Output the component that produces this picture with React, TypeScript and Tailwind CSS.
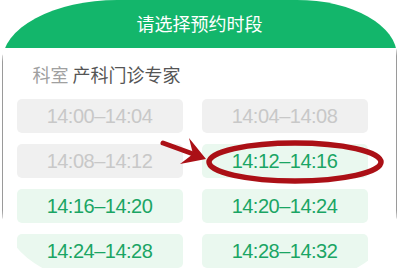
import React from "react";

const slots: { t: string; on: boolean }[] = [
  { t: "14:00–14:04", on: false },
  { t: "14:04–14:08", on: false },
  { t: "14:08–14:12", on: false },
  { t: "14:12–14:16", on: true },
  { t: "14:16–14:20", on: true },
  { t: "14:20–14:24", on: true },
  { t: "14:24–14:28", on: true },
  { t: "14:28–14:32", on: true },
];

export default function App() {
  return (
    <div className="relative w-[397px] h-[271px] overflow-hidden bg-white">
      <div className="ml-[2px] w-[395px] h-[285px] overflow-hidden rounded-tl-[115px_62px] rounded-tr-[100px_56px] rounded-bl-[110px_75px] rounded-br-[110px_75px] flex flex-col">
        <div className="h-[48px] shrink-0 bg-[#13b66b] flex justify-center pt-[11px]">
          <span className="text-white text-[18px] leading-[24px] font-['Noto_Sans_CJK_SC',sans-serif]">
            请选择预约时段
          </span>
        </div>
        <div className="flex-1 bg-white border-x-[1.5px] border-[#9a9a9a] pl-[13.5px]">
          <div className="pt-[14px] pl-[16px] h-[51px] text-[18px] leading-[24px] font-['Noto_Sans_CJK_SC',sans-serif]">
            <span className="text-[#a0a0a0]">科室</span>
            <span className="text-[#555555]"> 产科门诊专家</span>
          </div>
          <div className="grid grid-cols-[166px_166px] gap-x-[19px] gap-y-[11px]">
            {slots.map((s) => (
              <div
                key={s.t}
                className={
                  s.on
                    ? "h-[34px] rounded-[5px] bg-[#eaf8ef] text-[#1aa564] flex items-center justify-center text-[20px] tracking-[-0.5px] font-['Liberation_Sans',sans-serif]"
                    : "h-[34px] rounded-[5px] bg-[#f0f0f0] text-[#c8c8c8] flex items-center justify-center text-[20px] tracking-[-0.5px] font-['Liberation_Sans',sans-serif]"
                }
              >
                {s.t}
              </div>
            ))}
          </div>
        </div>
      </div>
      <svg
        className="absolute left-0 top-0 pointer-events-none"
        width="397"
        height="271"
        viewBox="0 0 397 271"
      >
        <ellipse cx="295" cy="162" rx="86" ry="19" fill="none" stroke="#ab1016" strokeWidth="5.5" />
        <line x1="163" y1="143" x2="196" y2="155" stroke="#ab1016" strokeWidth="5" strokeLinecap="round" />
        <polygon points="189,138 206,159 180,164 193,154" fill="#ab1016" />
      </svg>
    </div>
  );
}
